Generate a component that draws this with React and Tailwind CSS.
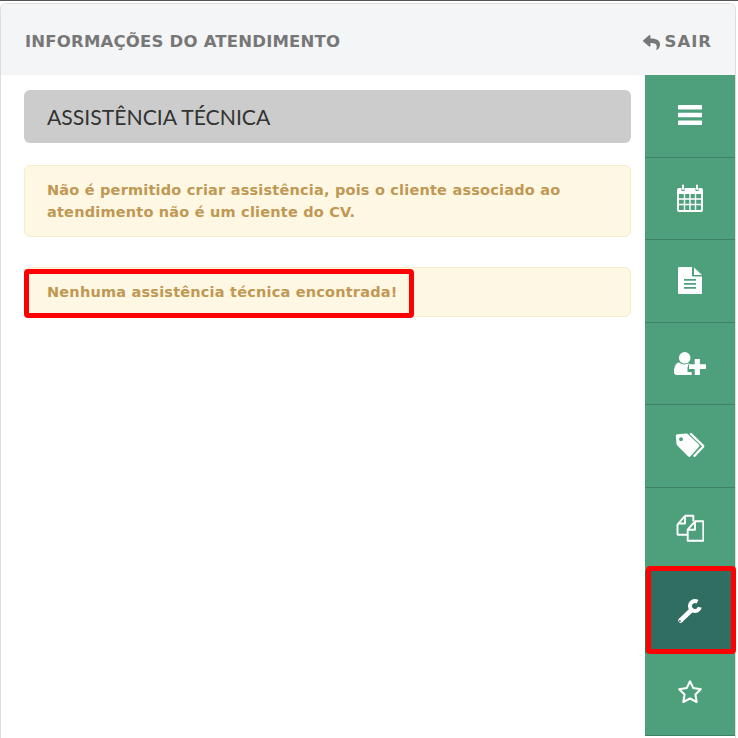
import { FaReply } from 'react-icons/fa';

const BarsIcon = () => (
  <svg className="-mt-[2px]" width="24" height="20" viewBox="0 0 24 20" fill="currentColor">
    <rect width="24" height="4.4" rx="0.6" />
    <rect y="7.8" width="24" height="4.4" rx="0.6" />
    <rect y="15.6" width="24" height="4.4" rx="0.6" />
  </svg>
);

const CalendarIcon = () => (
  <svg width="26" height="28" viewBox="0 0 26 28">
    <path fillRule="evenodd" fill="currentColor" d="M2 4h2.5v3h3V4h11v3h3V4H24a2 2 0 0 1 2 2v20a2 2 0 0 1-2 2H2a2 2 0 0 1-2-2V6a2 2 0 0 1 2-2zM2 10v16h22V10z" />
    <rect x="5" y="0.5" width="2" height="5.5" rx="1" fill="currentColor" />
    <rect x="19" y="0.5" width="2" height="5.5" rx="1" fill="currentColor" />
    <path stroke="currentColor" strokeWidth="1.4" d="M7.5 10v16M13 10v16M18.5 10v16M2 15h22M2 20.5h22" />
  </svg>
);

const FileIcon = () => (
  <svg width="24" height="27" viewBox="0 0 24 27" fill="currentColor">
    <path fillRule="evenodd" d="M1 0h13v8.5a1 1 0 0 0 1 1h9V26a1 1 0 0 1-1 1H1a1 1 0 0 1-1-1V1a1 1 0 0 1 1-1zM6 12v1.8h12V12zM6 16v1.8h12V16zM6 20v1.8h12V20z" />
    <path d="M16 0.5l8 7.5h-8z" />
  </svg>
);

const UserPlusIcon = () => (
  <svg width="32" height="23" viewBox="0 0 32 23" fill="currentColor">
    <circle cx="10.7" cy="5.8" r="5.8" />
    <path d="M0 20c0-5 1.500-9 5-9.500 1.500 1.200 3.500 2 5.500 2 1.500 0 3-.5 4-1.200l1 1.200h-1.500v2.200h-0.500v5.300h4.200V23H2.500C1 23 0 22 0 20z" />
    <path d="M20.700 7h5.200v5.200H32V17h-6.100v6h-5.200v-6H15v-4.800h5.700z" />
  </svg>
);

const TagsIcon = () => (
  <svg className="-mt-[2px]" width="30" height="24" viewBox="0 0 30 24">
    <path fillRule="evenodd" fill="currentColor" d="M2.500 1.200L11.500 0.500a2.500 2.500 0 0 1 1.500.7L23.800 11.500a1.800 1.800 0 0 1 0 2.500L15.500 23.300a1.800 1.800 0 0 1-2.500 0L2.300 12.500a3 3 0 0 1-.8-1.500L0.800 3a1.700 1.700 0 0 1 1.700-1.800zM6 4.300a1.900 1.900 0 1 0 .01 0z" />
    <path fill="none" stroke="currentColor" strokeWidth="2.400" strokeLinecap="round" strokeLinejoin="round" d="M16 1l11.800 11.500a1 1 0 0 1 0 1.500L19.500 22.800" />
  </svg>
);

const FilesIcon = () => (
  <svg className="-mt-px" width="28" height="28" viewBox="0 0 28 28" fill="none" stroke="currentColor" strokeWidth="1.900" strokeLinejoin="round">
    <path d="M9 1.800h8.300v5.500M9 1.800L1.500 10.500v9.700a.5.500 0 0 0 .5.500h9.700" />
    <path d="M9 1.800v7.700H2" />
    <path d="M19 7.300h8.300v19.400H11.700V15.700z" />
    <path d="M19 7.300v8.400h-7.300" />
  </svg>
);

const StarIcon = () => (
  <svg className="-mt-[4px]" width="26" height="25" viewBox="0 0 26 25" fill="none" stroke="currentColor" strokeWidth="2" strokeLinejoin="round">
    <path d="M13 2.300l3.300 6.800 7.500 1.100-5.400 5.300 1.300 7.500-6.700-3.500-6.700 3.500 1.300-7.500-5.400-5.300 7.500-1.100z" />
  </svg>
);

const WrenchIcon = () => (
  <svg width="26" height="26" viewBox="0 0 26 26" fill="none" stroke="currentColor">
    <path strokeWidth="4" d="M22.800 9.300A5 5 0 1 1 20.500 3.700" />
    <path strokeWidth="4.600" strokeLinecap="round" d="M14 12.500L3.500 22.500" />
    <circle cx="2.900" cy="23" r="0.900" fill="#316e62" stroke="none" />
  </svg>
);

const menu = [BarsIcon, CalendarIcon, FileIcon, UserPlusIcon, TagsIcon, FilesIcon, WrenchIcon, StarIcon];

export default function App() {
  return (
    <div className="h-[738px] w-[738px] overflow-hidden bg-white font-['DejaVu_Sans',sans-serif]">
      <div className="h-px bg-[#555]" />
      <div className="mr-[2px] mt-[2px] h-[740px] rounded-t-md border border-b-0 border-[#ddd]">
        <header className="flex h-[71px] items-center justify-between rounded-t-md bg-[#f4f5f7] pt-[6px] pl-[24px] pr-[23px] text-[16.5px] font-bold tracking-[0.2px] text-[#777]">
          <h2>INFORMAÇÕES DO ATENDIMENTO</h2>
          <a className="flex items-center gap-[5px] tracking-[1px]">
            <FaReply size={17} />
            SAIR
          </a>
        </header>
        <div className="flex">
          <main className="flex-1 pr-[14px] pl-[23px] pt-[15px]">
            <div className="flex h-[53px] items-center rounded-md bg-[#ccc] pt-[2px] pl-[23px] font-['Lato',sans-serif] text-[21.2px] text-[#333]">
              ASSISTÊNCIA TÉCNICA
            </div>
            <div className="mt-[22px] rounded-md border border-[#faebcc] bg-[#fef7e3] px-[22px] py-[13px] text-[14.5px] leading-[22px] font-bold tracking-[0.2px] text-[#c09853]">
              Não é permitido criar assistência, pois o cliente associado ao atendimento não é um cliente do CV.
            </div>
            <div className="relative mt-[30px] rounded-md border border-[#faebcc] bg-[#fef7e3] px-[22px] py-[13px] text-[14.5px] leading-[22px] font-bold tracking-[0.2px] text-[#c09853]">
              Nenhuma assistência técnica encontrada!
              <div className="absolute top-[1px] left-[-1px] h-[49px] w-[390px] rounded-sm border-[5px] border-[#f00]" />
            </div>
          </main>
          <nav className="w-[90px] shrink-0 bg-[#4ea07c]">
            {menu.map((Icon, i) => (
              <div key={i} className={`relative flex h-[82.6px] items-center justify-center border-b border-[#3f8165] text-white ${i === 6 ? 'bg-[#316e62]' : ''}`}>
                <Icon />
                {i === 6 && <div className="absolute top-[-4.6px] left-px h-[88px] w-[90px] rounded-sm border-[5px] border-[#f00]" />}
              </div>
            ))}
          </nav>
        </div>
      </div>
    </div>
  );
}
